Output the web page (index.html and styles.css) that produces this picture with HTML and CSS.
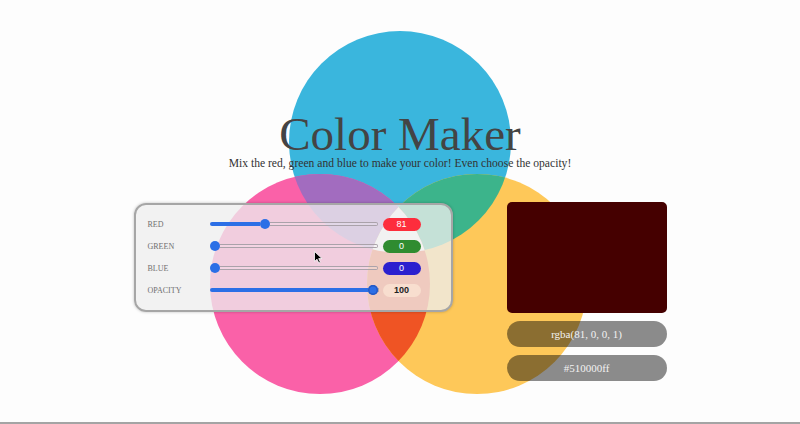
FILE: index.html
```html
<!DOCTYPE html>
<html lang="en">
<head>
<meta charset="utf-8">
<title>Color Maker</title>
<link rel="stylesheet" href="styles.css">
</head>
<body>
<div class="page">
  <svg class="bg" width="800" height="422" viewBox="0 0 800 422" aria-hidden="true">
    <defs>
      <clipPath id="cb"><circle cx="400" cy="142" r="111"/></clipPath>
      <clipPath id="cp"><circle cx="320" cy="284" r="110"/></clipPath>
    </defs>
    <circle cx="400" cy="142" r="111" fill="#3ab6dd"/>
    <circle cx="320" cy="284" r="110" fill="#fa61a8"/>
    <circle cx="477" cy="284" r="110" fill="#fec859"/>
    <g clip-path="url(#cb)">
      <circle cx="320" cy="284" r="110" fill="#a26cbf"/>
      <circle cx="477" cy="284" r="110" fill="#3cb48b"/>
    </g>
    <g clip-path="url(#cp)">
      <circle cx="477" cy="284" r="110" fill="#ef5424"/>
      <g clip-path="url(#cb)">
        <circle cx="477" cy="284" r="110" fill="#ffffff"/>
      </g>
    </g>
  </svg>

  <header class="head">
    <h1 class="title">Color Maker</h1>
    <p class="sub">Mix the red, green and blue to make your color! Even choose the opacity!</p>
  </header>

  <main class="row">
    <section class="panel">
      <span class="lbl">Red</span>
      <div class="track"><div class="fill" style="width:50px"></div><div class="thumb"></div><div class="rest"></div></div>
      <span class="val val-red">81</span>

      <span class="lbl">Green</span>
      <div class="track"><div class="fill" style="width:0px"></div><div class="thumb"></div><div class="rest"></div></div>
      <span class="val val-green">0</span>

      <span class="lbl">Blue</span>
      <div class="track"><div class="fill" style="width:0px"></div><div class="thumb"></div><div class="rest"></div></div>
      <span class="val val-blue">0</span>

      <span class="lbl">Opacity</span>
      <div class="track"><div class="fill" style="width:158px"></div><div class="thumb thumb-focus"></div><div class="rest"></div></div>
      <span class="val val-op">100</span>
    </section>

    <aside class="out">
      <div class="swatch"></div>
      <div class="pill">rgba(81, 0, 0, 1)</div>
      <div class="pill">#510000ff</div>
    </aside>
  </main>

  <svg class="cursor" width="10" height="13" viewBox="0 0 10 13" aria-hidden="true">
    <path d="M0.5 0.5 L0.5 10.5 L3 8.2 L4.8 12 L6.4 11.2 L4.7 7.6 L8 7.6 Z" fill="#000" stroke="#fff" stroke-width="0.8"/>
  </svg>
</div>
</body>
</html>
```

FILE: styles.css
```css
* { box-sizing: border-box; }

html, body {
  margin: 0;
  padding: 0;
  background: #fdfdfd;
}

.page {
  position: relative;
  width: 800px;
  height: 424px;
  border-bottom: 2px solid #a4a4a4;
  overflow: hidden;
  font-family: "Liberation Serif", "Times New Roman", serif;
}

.bg {
  position: absolute;
  left: 0;
  top: 0;
  z-index: 0;
}

.head {
  position: relative;
  z-index: 1;
  padding-top: 112px;
  text-align: center;
}

.title {
  margin: 0;
  font-size: 47px;
  line-height: 44px;
  font-weight: normal;
  color: #444;
}

.sub {
  margin: 0;
  font-size: 11.6px;
  line-height: 16px;
  color: #333;
}

.row {
  position: relative;
  z-index: 1;
  display: flex;
  justify-content: center;
  align-items: flex-start;
  gap: 54px;
  margin-top: 30px;
}

.panel {
  width: 319px;
  margin-top: 1px;
  padding: 8px 30px 9px 12px;
  border: 2px solid #a6a6a6;
  border-radius: 12px;
  background: rgba(238, 238, 238, 0.77);
  box-shadow: 0 0 3px rgba(0, 0, 0, 0.25);
  display: grid;
  grid-template-columns: 57px 168px 38px;
  grid-auto-rows: 22px;
  column-gap: 5px;
  align-items: center;
}

.lbl {
  font-size: 8px;
  text-transform: uppercase;
  color: #707070;
}

.track {
  display: flex;
  align-items: center;
  height: 10px;
}

.fill {
  height: 4px;
  background: #2c6fe6;
  border-radius: 2px 0 0 2px;
  flex: none;
}

.thumb {
  width: 10px;
  height: 10px;
  border-radius: 50%;
  background: #2c6fe6;
  flex: none;
}

.thumb-focus {
  box-shadow: inset 0 0 0 1.5px #2559c4;
}

.rest {
  flex: 1;
  height: 4px;
  border: 1px solid #aaa2aa;
  border-left: none;
  border-radius: 0 3px 3px 0;
  background: rgba(255, 255, 255, 0.15);
}

.val {
  height: 13px;
  border-radius: 7px;
  font-family: "Liberation Sans", Arial, sans-serif;
  font-size: 9px;
  line-height: 13px;
  text-align: center;
  color: #fff;
}

.val-red { background: #fd2d3c; }
.val-green { background: #2f8c30; }
.val-blue { background: #2b20cf; }
.val-op {
  background: #f8decf;
  color: #222;
  font-weight: bold;
}

.out {
  width: 160px;
  display: flex;
  flex-direction: column;
  gap: 8px;
}

.swatch {
  height: 111px;
  border-radius: 5px;
  background: #450000;
}

.pill {
  height: 26px;
  border-radius: 13px;
  background: rgba(0, 0, 0, 0.45);
  color: #f2f2f2;
  font-size: 11px;
  line-height: 26px;
  text-align: center;
}

.cursor {
  position: absolute;
  left: 314px;
  top: 251px;
  z-index: 2;
}
```
